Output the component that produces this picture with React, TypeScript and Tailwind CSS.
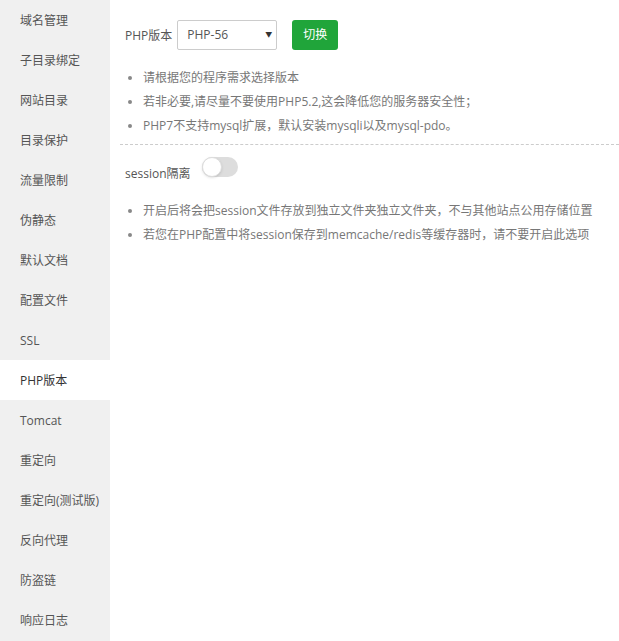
import { useState } from 'react'

const menu = [
	'域名管理',
	'子目录绑定',
	'网站目录',
	'目录保护',
	'流量限制',
	'伪静态',
	'默认文档',
	'配置文件',
	'SSL',
	'PHP版本',
	'Tomcat',
	'重定向',
	'重定向(测试版)',
	'反向代理',
	'防盗链',
	'响应日志',
]

const font = { fontFamily: '"Open Sans", "Noto Sans CJK SC", sans-serif' }

function Tip({ children }: { children: React.ReactNode }) {
	return (
		<li className="flex items-center">
			<span className="w-[4px] h-[4px] rounded-full bg-[#888] ml-[3px] mr-[11px]" />
			{children}
		</li>
	)
}

export default function App() {
	const [active] = useState('PHP版本')
	const [version, setVersion] = useState('PHP-56')
	const [session, setSession] = useState(false)

	return (
		<div className="flex w-[619px] h-[641px] bg-white text-[12px] text-[#555]" style={font}>
			<ul className="w-[110px] shrink-0 bg-[#f0f0f0]">
				{menu.map((item) => (
					<li
						key={item}
						className={
							'h-10 flex items-center pt-[2px] pl-5 cursor-pointer ' +
							(item === active ? 'bg-white text-[#333]' : 'text-[#555]')
						}
					>
						{item}
					</li>
				))}
			</ul>

			<div className="flex-1 pl-[15px] pt-5">
				<div className="flex items-center">
					<span className="text-[#555] mr-[5px] pt-[2px]">PHP版本</span>
					<div className="relative">
						<select
							value={version}
							onChange={(e) => setVersion(e.target.value)}
							className="appearance-none w-[100px] h-[30px] border border-[#ccc] rounded-[2px] pl-[9px] text-[12px] text-[#555] bg-white outline-none"
						>
							<option>PHP-56</option>
							<option>PHP-70</option>
							<option>PHP-72</option>
						</select>
						<span className="pointer-events-none absolute right-[5px] top-[10px] text-[7px] text-[#333]">▼</span>
					</div>
					<button className="ml-[15px] h-[30px] w-[46px] rounded-[3px] bg-[#20a53a] text-white text-[12px]">
						切换
					</button>
				</div>

				<ul className="mt-[16px] text-[#777] leading-6">
					<Tip>请根据您的程序需求选择版本</Tip>
					<Tip>若非必要,请尽量不要使用PHP5.2,这会降低您的服务器安全性；</Tip>
					<Tip>PHP7不支持mysql扩展，默认安装mysqli以及mysql-pdo。</Tip>
				</ul>

				<div className="mt-[6px] -ml-[5px] border-t border-dashed border-[#ccc]" />

				<div className="flex items-start mt-[12px]">
					<span className="mt-[8px]">session隔离</span>
					<button
						onClick={() => setSession(!session)}
						className={
							'ml-[11px] relative w-9 h-5 rounded-full transition-colors ' +
							(session ? 'bg-[#20a53a]' : 'bg-[#ddd]')
						}
					>
						<span
							className={
								'absolute top-0 w-5 h-5 rounded-full bg-white border border-[#ddd] shadow-sm transition-all ' +
								(session ? 'left-4' : 'left-0')
							}
						/>
					</button>
				</div>

				<ul className="mt-[16px] text-[#777] leading-6">
					<Tip>开启后将会把session文件存放到独立文件夹独立文件夹，不与其他站点公用存储位置</Tip>
					<Tip>若您在PHP配置中将session保存到memcache/redis等缓存器时，请不要开启此选项</Tip>
				</ul>
			</div>
		</div>
	)
}
